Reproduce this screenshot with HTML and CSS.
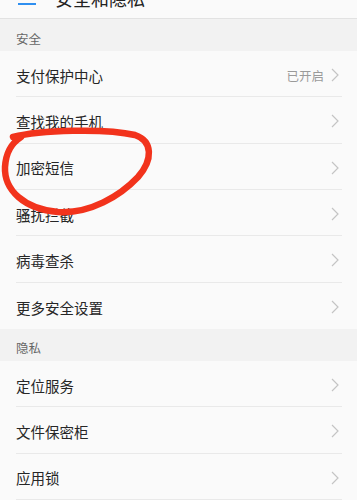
FILE: index.html
```html
<!DOCTYPE html>
<html lang="zh-CN">
<head>
<meta charset="utf-8">
<title>安全和隐私</title>
<link rel="stylesheet" href="styles.css">
</head>
<body>
<div class="page">
  <header class="toolbar">
    <span class="menu"><i></i><i></i><i></i></span>
    <span class="title">安全和隐私</span>
  </header>

  <div class="section-head">安全</div>
  <ul class="list">
    <li class="item"><div class="row"><span class="label">支付保护中心</span><span class="status">已开启</span><svg class="chev" viewBox="0 0 8 14"><polyline points="1,1 7,7 1,13"/></svg></div></li>
    <li class="item"><div class="row"><span class="label">查找我的手机</span><svg class="chev" viewBox="0 0 8 14"><polyline points="1,1 7,7 1,13"/></svg></div></li>
    <li class="item"><div class="row"><span class="label">加密短信</span><svg class="chev" viewBox="0 0 8 14"><polyline points="1,1 7,7 1,13"/></svg></div></li>
    <li class="item"><div class="row"><span class="label">骚扰拦截</span><svg class="chev" viewBox="0 0 8 14"><polyline points="1,1 7,7 1,13"/></svg></div></li>
    <li class="item"><div class="row"><span class="label">病毒查杀</span><svg class="chev" viewBox="0 0 8 14"><polyline points="1,1 7,7 1,13"/></svg></div></li>
    <li class="item"><div class="row"><span class="label">更多安全设置</span><svg class="chev" viewBox="0 0 8 14"><polyline points="1,1 7,7 1,13"/></svg></div></li>
  </ul>

  <div class="section-head">隐私</div>
  <ul class="list open-end">
    <li class="item"><div class="row"><span class="label">定位服务</span><svg class="chev" viewBox="0 0 8 14"><polyline points="1,1 7,7 1,13"/></svg></div></li>
    <li class="item"><div class="row"><span class="label">文件保密柜</span><svg class="chev" viewBox="0 0 8 14"><polyline points="1,1 7,7 1,13"/></svg></div></li>
    <li class="item"><div class="row"><span class="label">应用锁</span><svg class="chev" viewBox="0 0 8 14"><polyline points="1,1 7,7 1,13"/></svg></div></li>
  </ul>

  <svg class="scribble" viewBox="0 0 357 500" width="357" height="500">
    <path d="M 13 137 C 40 130, 105 128, 135 135 C 153 141, 153 160, 138 177 C 120 196, 90 214, 58 212 C 24 209, 4 190, 5 167 C 6 151, 12 143, 21 137"/>
  </svg>
</div>
</body>
</html>
```

FILE: styles.css
```css
* { box-sizing: border-box; }
html, body { margin: 0; padding: 0; }
body {
  background: #f2f2f2;
  font-family: "Noto Sans CJK SC", "Noto Sans", sans-serif;
  color: #333;
  width: 357px;
  height: 500px;
  overflow: hidden;
}
.page {
  position: relative;
  display: flow-root;
}
.toolbar {
  height: 42px;
  margin-top: -23px;
  background: #fafafa;
  border-bottom: 1px solid #e2e2e2;
  display: flex;
  align-items: center;
  padding-left: 18px;
}
.menu {
  display: flex;
  flex-direction: column;
  gap: 4px;
  width: 18px;
}
.menu i {
  display: block;
  height: 2px;
  background: #2f8ff0;
}
.title {
  margin-left: 19px;
  font-size: 18px;
  color: #222;
}
.section-head {
  height: 32px;
  padding: 6px 16px 0;
  display: flex;
  align-items: center;
  font-size: 12.5px;
  color: #666;
  background: #f2f2f2;
}
.list {
  list-style: none;
  margin: 0;
  padding: 0;
  background: #fafafa;
}
.item { padding: 0 15px 0 16px; }
.row {
  height: 46.33px;
  display: flex;
  align-items: center;
  padding-top: 3px;
  padding-right: 3px;
  border-bottom: 1px solid #e9e9e9;
}
.item:last-child .row { border-bottom: none; }
.open-end .item:last-child .row { border-bottom: 1px solid #e9e9e9; }
.label {
  flex: 1;
  font-size: 14.5px;
  color: #262626;
}
.status {
  font-size: 12.5px;
  color: #9a9a9a;
  margin-right: 7px;
}
.chev {
  width: 8px;
  height: 14px;
  fill: none;
  stroke: #c4c4c4;
  stroke-width: 1.2;
}
.scribble {
  position: absolute;
  left: 0;
  top: 0;
  pointer-events: none;
}
.scribble path {
  fill: none;
  stroke: #f2331c;
  stroke-width: 6.5;
  stroke-linecap: round;
  stroke-linejoin: round;
}
```
